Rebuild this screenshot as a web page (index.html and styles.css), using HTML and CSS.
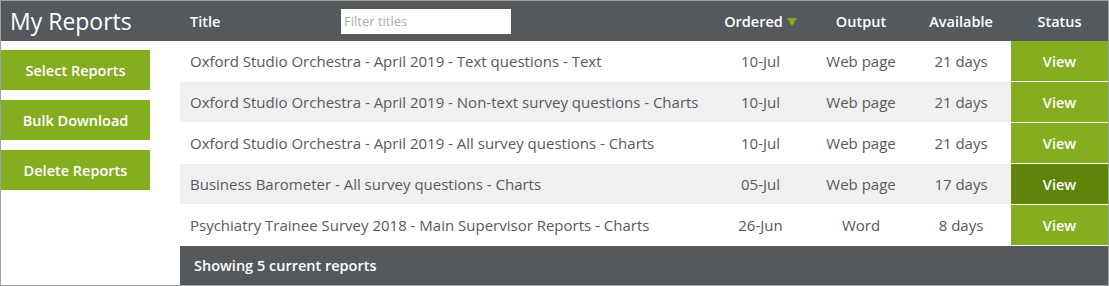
FILE: index.html
```html
<!DOCTYPE html>
<html lang="en">

<head>
    <meta charset="UTF-8">
    <title>My Reports</title>
    <link rel="stylesheet" href="styles.css">
</head>

<body>
    <div class="reports">
        <div class="topbar">
            <div class="brand">My Reports</div>
            <div class="row head">
                <div class="cell title">
                    <span>Title</span>
                    <input class="filter" type="text" placeholder="Filter titles">
                </div>
                <div class="cell ordered">Ordered <span class="sort"></span></div>
                <div class="cell output">Output</div>
                <div class="cell available">Available</div>
                <div class="cell status">Status</div>
            </div>
        </div>

        <div class="main">
            <div class="sidebar">
                <button class="action">Select Reports</button>
                <button class="action">Bulk Download</button>
                <button class="action">Delete Reports</button>
            </div>

            <div class="table">
                <div class="row">
                    <div class="cell title">Oxford Studio Orchestra - April 2019 - Text questions - Text</div>
                    <div class="cell ordered">10-Jul</div>
                    <div class="cell output">Web page</div>
                    <div class="cell available">21 days</div>
                    <div class="cell status"><a class="view">View</a></div>
                </div>
                <div class="row alt">
                    <div class="cell title">Oxford Studio Orchestra - April 2019 - Non-text survey questions - Charts</div>
                    <div class="cell ordered">10-Jul</div>
                    <div class="cell output">Web page</div>
                    <div class="cell available">21 days</div>
                    <div class="cell status"><a class="view">View</a></div>
                </div>
                <div class="row">
                    <div class="cell title">Oxford Studio Orchestra - April 2019 - All survey questions - Charts</div>
                    <div class="cell ordered">10-Jul</div>
                    <div class="cell output">Web page</div>
                    <div class="cell available">21 days</div>
                    <div class="cell status"><a class="view">View</a></div>
                </div>
                <div class="row alt">
                    <div class="cell title">Business Barometer - All survey questions - Charts</div>
                    <div class="cell ordered">05-Jul</div>
                    <div class="cell output">Web page</div>
                    <div class="cell available">17 days</div>
                    <div class="cell status"><a class="view hover">View</a></div>
                </div>
                <div class="row">
                    <div class="cell title">Psychiatry Trainee Survey 2018 - Main Supervisor Reports - Charts</div>
                    <div class="cell ordered">26-Jun</div>
                    <div class="cell output">Word</div>
                    <div class="cell available">8 days</div>
                    <div class="cell status"><a class="view">View</a></div>
                </div>
                <div class="footer">Showing 5 current reports</div>
            </div>
        </div>
    </div>
</body>

</html>
```

FILE: styles.css
```css
html,
body {
    margin: 0;
    background: #fff;
}

body {
    font-family: "Open Sans", "Liberation Sans", sans-serif;
    color: #555a5e;
}

.reports {
    width: 1107px;
    height: 284px;
    border: 1px solid #9ea2a5;
    display: flex;
    flex-direction: column;
    overflow: hidden;
}

.topbar {
    display: flex;
    height: 40px;
    background: #54595d;
    color: #fff;
}

.brand {
    width: 170px;
    padding-left: 9px;
    font-size: 23px;
    line-height: 40px;
}

.row {
    display: flex;
    height: 40px;
    border-bottom: 1px solid #fff;
    font-size: 15px;
}

.row.head {
    flex: 1;
    border-bottom: none;
    font-size: 14.5px;
    font-weight: 600;
}

.row.alt {
    background: #f0f0f0;
}

.cell {
    display: flex;
    align-items: center;
    justify-content: center;
}

.cell.title {
    width: 520px;
    padding-left: 10px;
    justify-content: flex-start;
}

.head .cell.title span {
    width: 151px;
}

.filter {
    width: 170px;
    height: 25px;
    box-sizing: border-box;
    border: none;
    padding: 0 3px;
    font-family: inherit;
    font-size: 13px;
}

.filter::placeholder {
    color: #a8acaf;
}

.cell.ordered {
    width: 101px;
}

.cell.output {
    width: 100px;
}

.cell.available {
    width: 100px;
}

.cell.status {
    width: 97px;
}

.sort {
    display: inline-block;
    width: 0;
    height: 0;
    margin-left: 4px;
    margin-top: 2px;
    border-left: 5px solid transparent;
    border-right: 5px solid transparent;
    border-top: 8px solid #84ae1f;
}

.main {
    flex: 1;
    display: flex;
}

.sidebar {
    width: 179px;
    padding-top: 9px;
    display: flex;
    flex-direction: column;
    gap: 10px;
}

.action {
    width: 149px;
    height: 40px;
    border: none;
    background: #84ae1f;
    color: #fff;
    font-family: inherit;
    font-size: 14.5px;
    font-weight: 600;
    cursor: pointer;
}

.table {
    flex: 1;
    display: flex;
    flex-direction: column;
}

.view {
    align-self: stretch;
    flex: 1;
    display: flex;
    align-items: center;
    justify-content: center;
    background: #84ae1f;
    color: #fff;
    font-size: 14.5px;
    font-weight: 600;
    cursor: pointer;
}

.view:hover,
.view.hover {
    background: #5f840a;
}

.footer {
    flex: 1;
    background: #54595d;
    color: #fff;
    font-size: 14.5px;
    font-weight: 600;
    padding-left: 14px;
    display: flex;
    align-items: center;
}
```
